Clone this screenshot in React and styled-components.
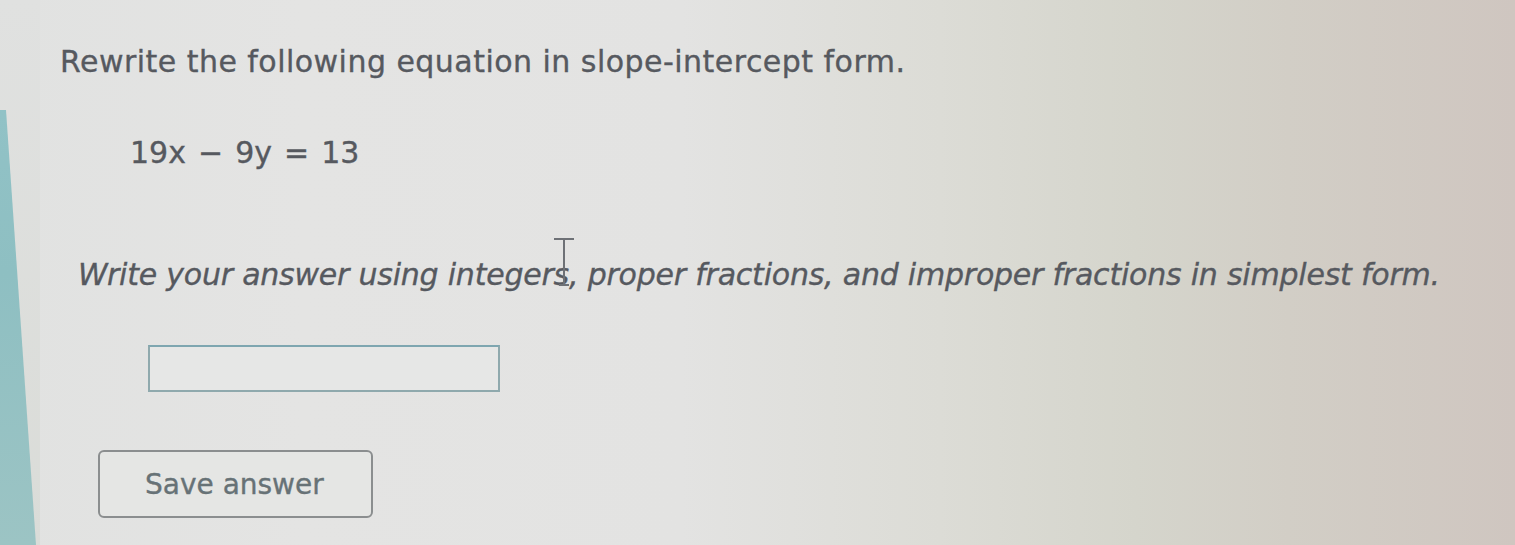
import styled, { createGlobalStyle } from "styled-components";

const GlobalStyle = createGlobalStyle`
  html, body {
    margin: 0;
    padding: 0;
  }
  body {
    font-family: "DejaVu Sans", Verdana, sans-serif;
  }
`;

const Page = styled.div`
  position: relative;
  width: 1515px;
  height: 545px;
  overflow: hidden;
  display: flex;
  background: linear-gradient(
    90deg,
    #e1e2e1 0%,
    #e4e4e3 20%,
    #e3e3e2 45%,
    #dcdcd6 62%,
    #d5d5cc 75%,
    #d2cec6 85%,
    #cfc6c0 100%
  );
`;

const Rail = styled.div`
  width: 40px;
  flex-shrink: 0;
  position: relative;
  background: linear-gradient(180deg, #e0e1e0 0%, #dadcd8 100%);

  &::before {
    content: "";
    position: absolute;
    inset: 0;
    background: linear-gradient(180deg, #93c4c9 0%, #8ebfc2 50%, #9cc4c4 100%);
    clip-path: polygon(0 110px, 6px 110px, 36px 545px, 0 545px);
  }
`;

const Content = styled.div`
  flex: 1;
  padding: 44px 0 0 20px;
  color: #56595f;
  -webkit-text-stroke: 0.35px #56595f;
`;

const Title = styled.div`
  font-size: 30px;
  line-height: 36px;
  letter-spacing: 0.47px;
`;

const Equation = styled.div`
  margin: 55px 0 0 70px;
  font-size: 30px;
  line-height: 36px;
  word-spacing: 2.5px;
`;

const Instruction = styled.div`
  margin: 86px 0 0 18px;
  font-size: 30px;
  line-height: 36px;
  font-style: italic;
  letter-spacing: -0.22px;
  white-space: nowrap;
`;

const AnswerBox = styled.div`
  margin: 52px 0 0 88px;
  width: 348px;
  height: 43px;
  border: 2px solid #8fa9ad;
  border-top-color: #7ea6b0;
  background: #e6e7e6;
`;

const SaveButton = styled.button`
  display: flex;
  align-items: center;
  justify-content: flex-start;
  margin: 58px 0 0 38px;
  width: 275px;
  height: 68px;
  padding: 0 0 0 45px;
  border: 2px solid #8b8e8f;
  border-radius: 6px;
  background: #e5e6e4;
  color: #677276;
  -webkit-text-stroke: 0.35px #677276;
  font-family: "DejaVu Sans", Verdana, sans-serif;
  font-size: 28px;
  box-sizing: border-box;
`;

const Cursor = styled.svg`
  position: absolute;
  left: 551px;
  top: 236px;
`;

export default function App() {
  return (
    <>
      <GlobalStyle />
      <Page>
        <Rail />
        <Content>
          <Title>Rewrite the following equation in slope-intercept form.</Title>
          <Equation>19x − 9y = 13</Equation>
          <Instruction>
            Write your answer using integers, proper fractions, and improper
            fractions in simplest form.
          </Instruction>
          <AnswerBox />
          <SaveButton>Save answer</SaveButton>
        </Content>
        <Cursor width="26" height="52" viewBox="0 0 26 52">
          <path
            d="M3 3 H23 M13 3 V49 M8 49 H18"
            stroke="#6e7176"
            strokeWidth="2"
            fill="none"
          />
        </Cursor>
      </Page>
    </>
  );
}
